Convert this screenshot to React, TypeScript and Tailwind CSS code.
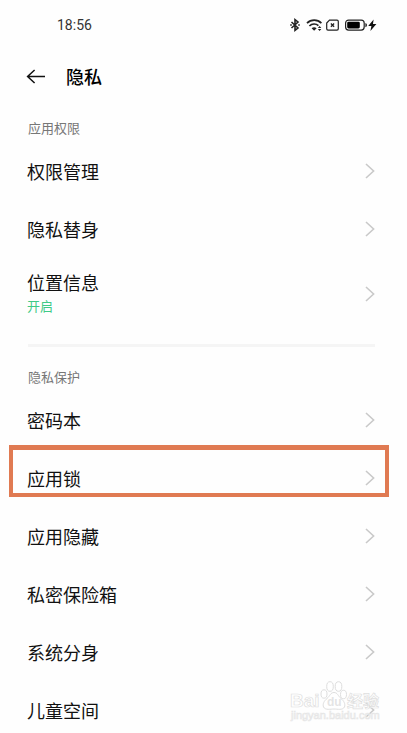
import React from "react";

type Item = { title: string; status?: string; highlighted?: boolean };

const permissionItems: Item[] = [
  { title: "权限管理" },
  { title: "隐私替身" },
  { title: "位置信息", status: "开启" },
];

const protectionItems: Item[] = [
  { title: "密码本" },
  { title: "应用锁", highlighted: true },
  { title: "应用隐藏" },
  { title: "私密保险箱" },
  { title: "系统分身" },
  { title: "儿童空间" },
];

function Chevron() {
  return (
    <svg className="h-4 w-[10px] shrink-0" viewBox="0 0 10 16" fill="none" aria-hidden="true">
      <path d="M1 1 L8.6 8 L1 15" stroke="#c9c9c9" strokeWidth="1.6" />
    </svg>
  );
}

function StatusIcons() {
  return (
    <svg className="h-4 w-[88px]" viewBox="0 0 88 16" fill="none" aria-hidden="true">
      {/* bluetooth */}
      <path d="M2.5 5 L9 11 L6 13.4 V2.6 L9 5 L2.5 11" stroke="#222" strokeWidth="1.6" />
      <path d="M1.2 8 H2.8 M9.2 8 H10.8" stroke="#222" strokeWidth="1.6" />
      {/* wifi */}
      <path d="M18 6.2 C22 2.2 28.4 2.2 32.4 6.2" stroke="#222" strokeWidth="1.7" />
      <path d="M20.4 9 C23 6.4 27 6.4 29.4 8.6" stroke="#222" strokeWidth="1.7" />
      <path d="M22.6 11.3 C24.2 9.9 26 9.9 27.6 11.3 L25.1 13.8 Z" fill="#222" />
      <path d="M28.9 10.9 L30.6 8.9 L32.3 10.9 Z M28.9 12 L30.6 14 L32.3 12 Z" fill="#222" />
      {/* sim card without service */}
      <path d="M40.5 3.2 H48 Q49.3 3.2 49.3 4.5 V11.8 Q49.3 13.1 48 13.1 H39 Q37.7 13.1 37.7 11.8 V6 Z" stroke="#222" strokeWidth="1.2" />
      <path d="M41.9 6.5 L45.1 9.7 M45.1 6.5 L41.9 9.7" stroke="#222" strokeWidth="1.3" />
      {/* battery */}
      <rect x="56.6" y="3.1" width="18.6" height="10" rx="3" stroke="#222" strokeWidth="1.2" />
      <rect x="58.2" y="4.7" width="12.6" height="6.8" rx="1.4" fill="#000" />
      <path d="M76.4 6 Q78 6.4 78 8.1 Q78 9.8 76.4 10.2 Z" fill="#222" />
      <path d="M84.6 2.4 L79.2 8.9 H82.4 L81.4 14 L87.4 7 H84 Z" fill="#111" />
    </svg>
  );
}

function Row({ title, status, highlighted }: Item) {
  return (
    <li className="relative">
      <button
        type="button"
        className={`flex w-full items-center justify-between pr-8 pl-[27px] text-left ${status ? "h-14" : "h-[42px]"}`}
      >
        <span className="flex flex-col">
          <span className="text-lg leading-6 text-[#111]">{title}</span>
          {status && <span className="text-[13px] leading-6 text-[#3fca86]">{status}</span>}
        </span>
        <Chevron />
      </button>
      {highlighted && (
        <span className="pointer-events-none absolute -top-3 right-[18px] left-[9px] h-[52px] border-x-4 border-t-[5px] border-b-4 border-[#e07a52]" />
      )}
    </li>
  );
}

function Section({ heading, items }: { heading: string; items: Item[] }) {
  return (
    <section>
      <h2 className="mb-3 pl-7 text-[13px] leading-5 text-[#777]">{heading}</h2>
      <ul className="flex flex-col gap-4">
        {items.map((item) => (
          <Row key={item.title} {...item} />
        ))}
      </ul>
    </section>
  );
}

function Watermark() {
  return (
    <svg
      className="pointer-events-none absolute right-[27px] bottom-2 h-[48px] w-[92px]"
      viewBox="0 0 92 48"
      role="img"
      aria-label="Baidu 经验"
    >
      <g fill="#fff" fillOpacity="0.7" stroke="#dedede" strokeWidth="1">
        <g fontFamily="'Liberation Sans', 'Noto Sans CJK SC', sans-serif" strokeWidth="0.7">
          <text x="2" y="30" fontSize="19" fontWeight="700">Bai</text>
          <text x="59" y="30" fontSize="16" fontWeight="700">经验</text>
          <text x="3" y="42" fontSize="11" stroke="#e6e6e6">jingyan.baidu.com</text>
        </g>
        <ellipse cx="36" cy="17" rx="3" ry="4.2" />
        <ellipse cx="42" cy="9.5" rx="3.3" ry="4.8" />
        <ellipse cx="50.5" cy="9.5" rx="3.3" ry="4.8" />
        <ellipse cx="55.5" cy="17.5" rx="3" ry="4.2" />
        <path d="M46 15.5 C49.5 15.5 50 19 53 21.5 C56 24 57.5 27 56.5 30 C54.5 33.5 49.5 32 46 32 C42.5 32 37.5 33.5 35.5 30 C34.5 27 36 24 39 21.5 C42 19 42.5 15.5 46 15.5 Z" />
        <text x="39" y="29" fontSize="12" fontWeight="700" fontFamily="'Liberation Sans', sans-serif" fill="#d8d8d8" stroke="none">du</text>
      </g>
    </svg>
  );
}

export default function App() {
  return (
    <div className="relative min-h-screen bg-[#fefefe] font-['Noto_Sans_CJK_SC','Noto_Sans_CJK_JP',sans-serif]">
      <div className="flex h-[50px] items-center justify-between pr-[30px] pl-[57px]">
        <time className="font-[Roboto,sans-serif] text-sm text-[#333]">18:56</time>
        <StatusIcons />
      </div>
      <header className="flex h-[52px] items-center gap-5 pl-[26px]">
        <button type="button" aria-label="返回">
          <svg className="h-4 w-5" viewBox="0 0 20 16" fill="none" aria-hidden="true">
            <path d="M8.6 2 L1.6 8.5 L8.6 15 M1.6 8.5 H19" stroke="#111" strokeWidth="1.5" />
          </svg>
        </button>
        <h1 className="text-lg leading-7 font-medium text-black">隐私</h1>
      </header>
      <main className="pt-4">
        <Section heading="应用权限" items={permissionItems} />
        <hr className="mt-[22px] mr-8 mb-5 ml-7 h-[3px] border-0 bg-[#f5f5f5]" />
        <Section heading="隐私保护" items={protectionItems} />
      </main>
      <Watermark />
    </div>
  );
}
